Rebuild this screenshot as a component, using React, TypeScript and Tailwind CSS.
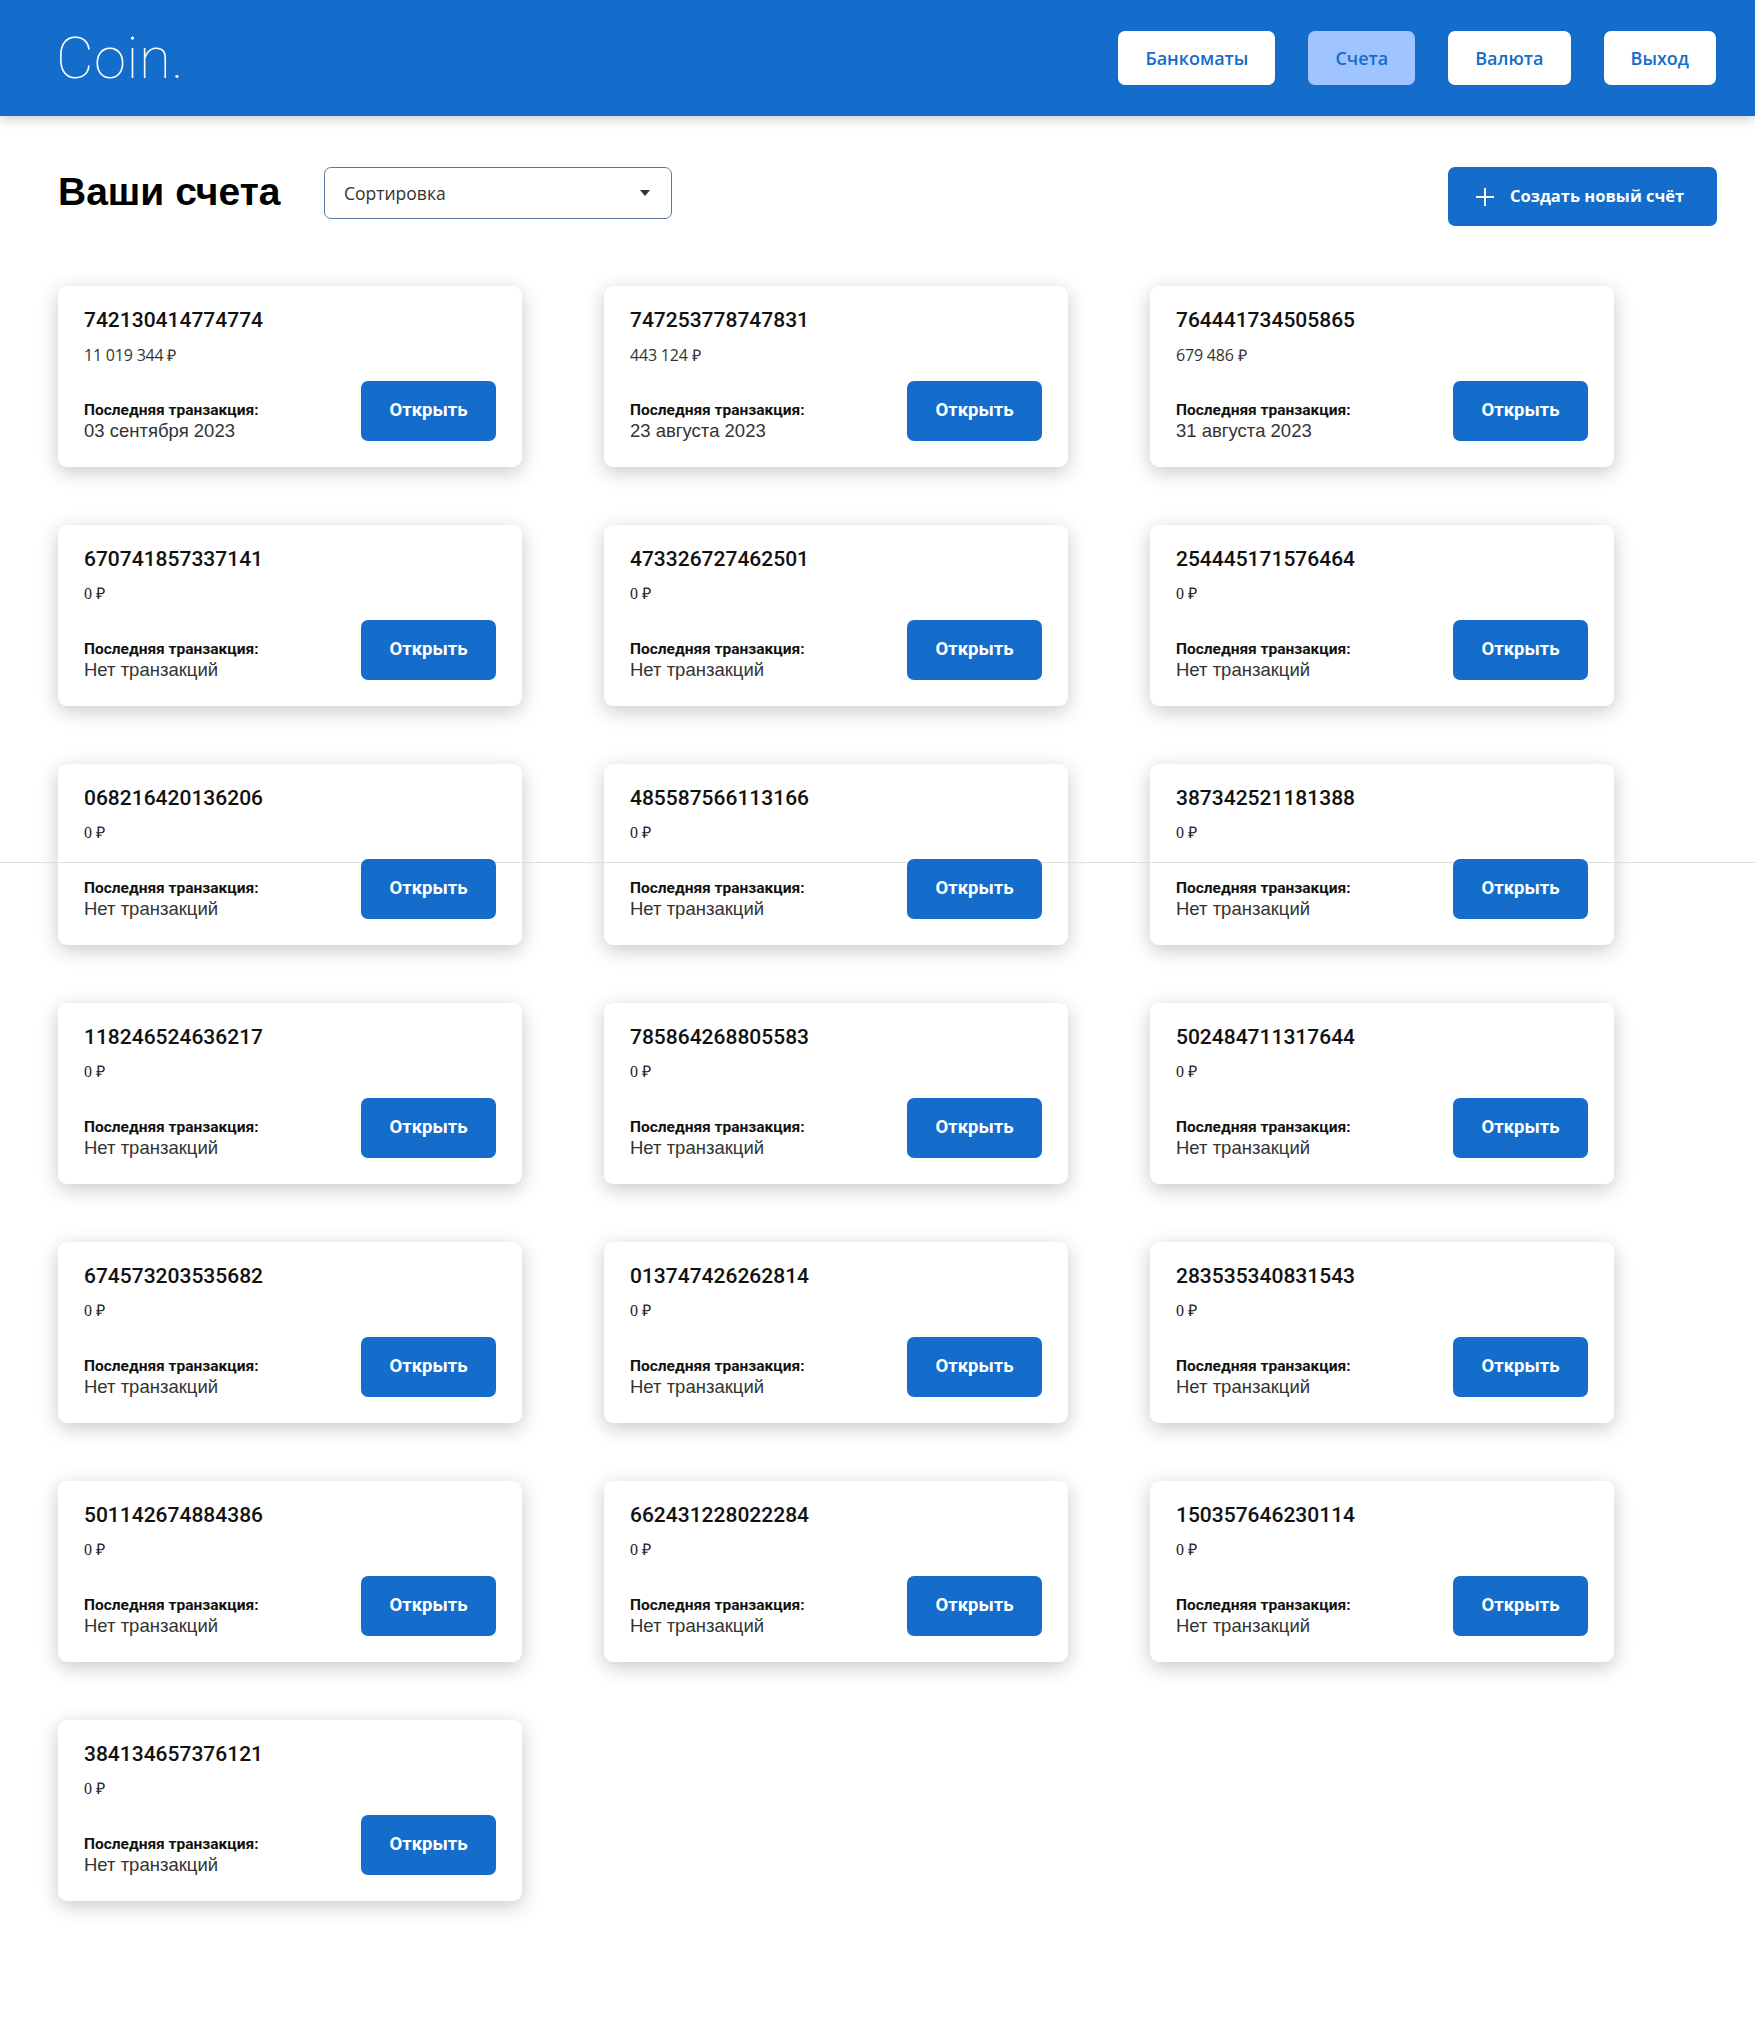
import React from 'react';

interface Account {
  number: string;
  balance: string;
  lastTransaction: string;
}

const accounts: Account[] = [
  { number: '742130414774774', balance: '11 019 344 ₽', lastTransaction: '03 сентября 2023' },
  { number: '747253778747831', balance: '443 124 ₽', lastTransaction: '23 августа 2023' },
  { number: '764441734505865', balance: '679 486 ₽', lastTransaction: '31 августа 2023' },
  { number: '670741857337141', balance: '0 ₽', lastTransaction: 'Нет транзакций' },
  { number: '473326727462501', balance: '0 ₽', lastTransaction: 'Нет транзакций' },
  { number: '254445171576464', balance: '0 ₽', lastTransaction: 'Нет транзакций' },
  { number: '068216420136206', balance: '0 ₽', lastTransaction: 'Нет транзакций' },
  { number: '485587566113166', balance: '0 ₽', lastTransaction: 'Нет транзакций' },
  { number: '387342521181388', balance: '0 ₽', lastTransaction: 'Нет транзакций' },
  { number: '118246524636217', balance: '0 ₽', lastTransaction: 'Нет транзакций' },
  { number: '785864268805583', balance: '0 ₽', lastTransaction: 'Нет транзакций' },
  { number: '502484711317644', balance: '0 ₽', lastTransaction: 'Нет транзакций' },
  { number: '674573203535682', balance: '0 ₽', lastTransaction: 'Нет транзакций' },
  { number: '013747426262814', balance: '0 ₽', lastTransaction: 'Нет транзакций' },
  { number: '283535340831543', balance: '0 ₽', lastTransaction: 'Нет транзакций' },
  { number: '501142674884386', balance: '0 ₽', lastTransaction: 'Нет транзакций' },
  { number: '662431228022284', balance: '0 ₽', lastTransaction: 'Нет транзакций' },
  { number: '150357646230114', balance: '0 ₽', lastTransaction: 'Нет транзакций' },
  { number: '384134657376121', balance: '0 ₽', lastTransaction: 'Нет транзакций' },
];

const navItems = [
  { label: 'Банкоматы', active: false },
  { label: 'Счета', active: true },
  { label: 'Валюта', active: false },
  { label: 'Выход', active: false },
];

const Header: React.FC = () => (
  <header className="h-[116px] bg-[#146ccb] pl-[58px] pr-[39px] flex items-center justify-between shadow-[0_4px_10px_rgba(0,0,0,0.18)] relative z-20">
    <div className="-ml-[2px] text-white text-[58px] font-thin font-['Roboto',sans-serif] leading-none tracking-[0.5px]">
      Coin.
    </div>
    <nav className="flex items-center gap-[33px]">
      {navItems.map(item => (
        <button
          key={item.label}
          className={`h-[54px] px-[27px] rounded-[7px] text-[18px] font-semibold font-['Open_Sans',sans-serif] text-[#146ccb] ${
            item.active ? 'bg-[#a0c4ff]' : 'bg-white'
          }`}
        >
          {item.label}
        </button>
      ))}
    </nav>
  </header>
);

const AccountCard: React.FC<{ account: Account }> = ({ account }) => {
  const isZero = account.balance === '0 ₽';
  return (
    <div className="h-[181px] bg-white rounded-[9px] shadow-[0_5px_20px_rgba(0,0,0,0.22)] px-[26px] pt-[20px] pb-[26px] flex flex-col">
      <p className="text-[21px] leading-[28px] font-medium font-['Roboto',sans-serif] text-[#111]">{account.number}</p>
      {isZero ? (
        <p className="mt-[11px] text-[16px] leading-[20px] font-['Liberation_Serif',serif] text-[#222]">0 ₽</p>
      ) : (
        <p className="mt-[11px] text-[16px] leading-[20px] tracking-[-0.2px] font-['Open_Sans',sans-serif] text-[#333]">
          {account.balance}
        </p>
      )}
      <div className="mt-auto flex items-end justify-between">
        <div>
          <p className="text-[15.5px] leading-[19px] font-bold font-['Roboto',sans-serif] text-[#111]">Последняя транзакция:</p>
          <p className="text-[18.5px] leading-[21px] font-['Liberation_Sans',sans-serif] text-[#333]">{account.lastTransaction}</p>
        </div>
        <button className="relative z-10 w-[135px] h-[60px] rounded-[7px] bg-[#146ccb] text-white text-[18.5px] font-bold font-['Roboto',sans-serif]">
          Открыть
        </button>
      </div>
    </div>
  );
};

export default function App() {
  return (
    <div className="min-h-screen bg-white relative">
      <Header />
      <main className="pl-[58px] pr-[38px] pt-[51px] pb-[115px]">
        <div className="flex items-start justify-between">
          <div className="flex items-start">
            <h1 className="w-[266px] text-[39px] leading-[50px] font-bold font-['Liberation_Sans',sans-serif] text-black">
              Ваши счета
            </h1>
            <div className="w-[348px] h-[52px] border border-[#5b7aa3] rounded-[7px] flex items-center justify-between pl-[19px] pr-[21px]">
              <span className="text-[17.5px] font-['Open_Sans',sans-serif] text-[#333]">Сортировка</span>
              <svg width="10" height="6" viewBox="0 0 10 6" className="text-[#333]">
                <path d="M0 0h10L5 6z" fill="currentColor" />
              </svg>
            </div>
          </div>
          <button className="h-[59px] w-[269px] rounded-[7px] bg-[#146ccb] text-white flex items-center pl-[26px] gap-[14px] text-[16.5px] font-bold font-['Open_Sans',sans-serif]">
            <svg width="22" height="22" viewBox="0 0 22 22" fill="none" stroke="currentColor" strokeWidth="2">
              <path d="M11 2v18M2 11h18" />
            </svg>
            Создать новый счёт
          </button>
        </div>
        <div className="mt-[60px] grid grid-cols-[repeat(3,464px)] gap-x-[82px] gap-y-[58px]">
          {accounts.map(a => (
            <AccountCard key={a.number} account={a} />
          ))}
        </div>
      </main>
      <div className="absolute left-0 right-0 top-[862px] h-px bg-[#dedede]" />
    </div>
  );
}
